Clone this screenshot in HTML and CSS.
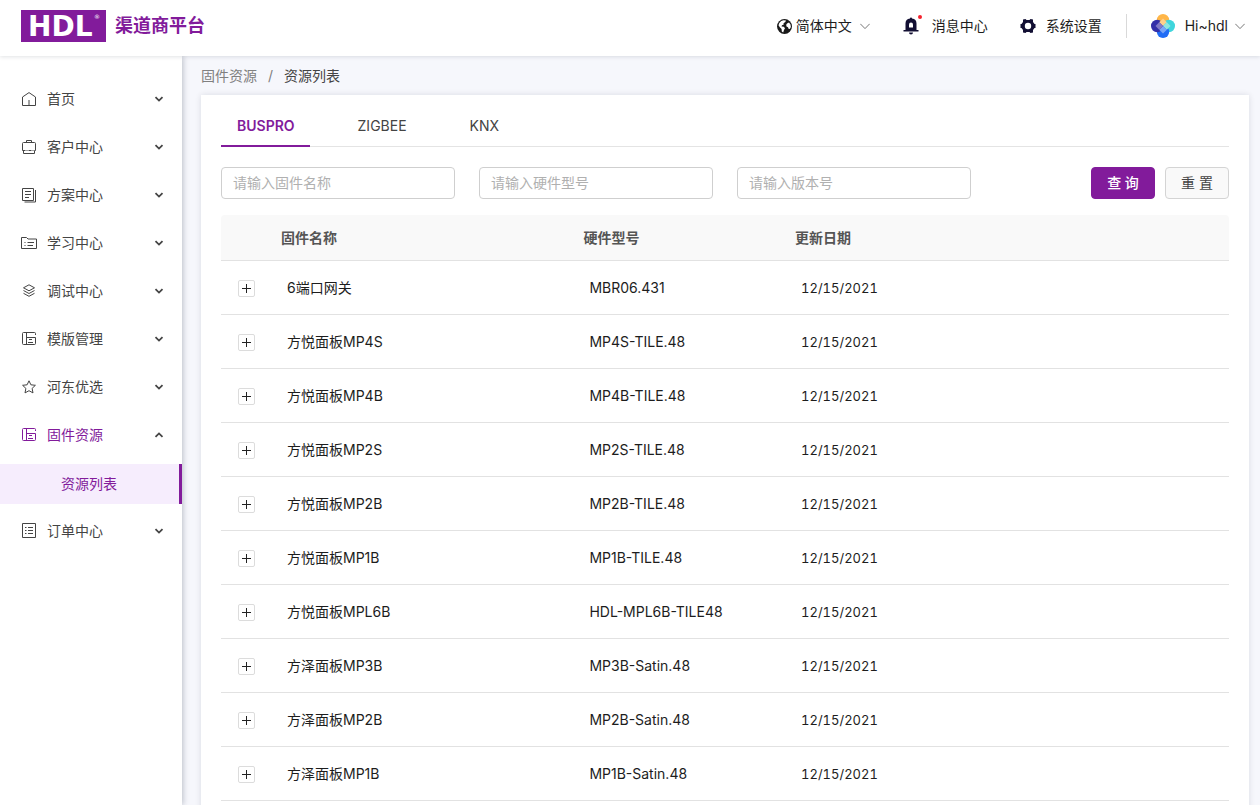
FILE: index.html
```html
<!DOCTYPE html>
<html lang="zh-CN">
<head>
    <meta charset="UTF-8">
    <meta name="viewport" content="width=device-width, initial-scale=1.0">
    <title>渠道商平台</title>
    <link rel="stylesheet" href="styles.css">
</head>
<body>
    <!-- 公用图标 -->
    <svg class="sprite" aria-hidden="true">
        <symbol id="arrow" viewBox="0 0 10 10">
            <path d="M1.5 3.2 5 6.6 8.5 3.2" fill="none" stroke="currentColor" stroke-width="1.8"/>
        </symbol>
        <symbol id="arrow-thin" viewBox="0 0 10 10">
            <path d="M.3 2.8 5 7.6 9.7 2.8" fill="none" stroke="currentColor" stroke-width="1"/>
        </symbol>
        <symbol id="layout" viewBox="0 0 14 14">
            <g fill="none" stroke="currentColor">
                <path d="M13.5 3V1.5a1 1 0 0 0-1-1h-11a1 1 0 0 0-1 1v10a1 1 0 0 0 1 1h11a1 1 0 0 0 1-1v-6h-9M4.5 .5v12"/>
                <path d="M7 7.5h3M6 10.5h5"/>
            </g>
        </symbol>
    </svg>

    <header class="header">
        <a class="brand" href="#">
            <span class="logo">HDL<sup>®</sup></span>
            <span class="brand-name">渠道商平台</span>
        </a>
        <div class="header-right">
            <button class="header-item lang" type="button">
                <svg width="15" height="15" viewBox="0 0 15 15">
                    <circle cx="7.5" cy="7.5" r="7.5" fill="#1a1a1a"/>
                    <path d="M6.5 1.2 9 1.5 8.3 3 6.5 4.2 6.8 5.5 5 6.2 4.5 7.5 6.8 7.8 8 9.2 7 11 6.2 13.5 4.8 12.5 4.6 10 2.8 8.2 1.5 6.2 2.3 4 4.2 2zM10 4.5 12 3.5 13.5 5.5 13.9 8 12.8 10 11.5 9.8 11 8.2 9.5 7.5 9.2 5.8z" fill="#fff"/>
                </svg>
                <span>简体中文</span>
                <svg class="caret" width="10" height="10"><use href="#arrow-thin"/></svg>
            </button>
            <a class="header-item message" href="#">
                <span class="bell">
                    <svg width="16" height="18" viewBox="0 0 16 18">
                        <path d="M7 1.5a1 1 0 0 1 2 0A5 5 0 0 1 13.5 6.5V13h2v1.5h-15V13h2V6.5A5 5 0 0 1 7 1.5zM6 15.5h4a2 2 0 0 1-4 0z" fill="#120f33"/>
                        <path d="M6 10.5v-3a2 2 0 0 1 4 0v3z" fill="#fff"/>
                    </svg>
                    <i class="dot"></i>
                </span>
                <span>消息中心</span>
            </a>
            <a class="header-item setting" href="#">
                <svg width="16" height="16" viewBox="0 0 16 16">
                    <path d="M3 1.5 5.5 1l1 1h3l1-1 2.5.5V4l1.500 2h1v4h-1L13 12v2.5l-2.500.5-1-1h-3l-1 1L3 14.5V12l-1.500-2h-1V6h1L3 4z" fill="#120f33"/>
                    <circle cx="8" cy="8" r="3.2" fill="#fff"/>
                </svg>
                <span>系统设置</span>
            </a>
            <span class="divider"></span>
            <button class="header-item user" type="button">
                <svg width="24" height="24" viewBox="0 0 24 24">
                    <circle cx="12" cy="6.2" r="6.2" fill="#ffb648"/>
                    <circle cx="17.8" cy="12" r="6.2" fill="#3fd5dc"/>
                    <circle cx="12" cy="17.8" r="6.2" fill="#1f6cf5"/>
                    <circle cx="6.2" cy="12" r="6.2" fill="#342ea8"/>
                    <path d="M12 4.5 15.8 8.2 12 12 8.2 8.2z" fill="#ffd08a"/>
                    <path d="M15.8 8.2 19.5 12 15.8 15.8 12 12z" fill="#8fe6df"/>
                    <path d="M12 12l3.8 3.8L12 19.5 8.2 15.8z" fill="#78a5f8"/>
                    <path d="M8.2 8.2 12 12 8.2 15.8 4.5 12z" fill="#8279c6"/>
                </svg>
                <span>Hi~hdl</span>
                <svg class="caret" width="10" height="10"><use href="#arrow-thin"/></svg>
            </button>
        </div>
    </header>

    <div class="container">
        <nav class="sidebar">
            <a class="menu-item" href="#">
                <svg class="icon" viewBox="0 0 14 14"><path d="M.5 5 7 .6 13.5 5v8.5H.5zM7 8v5.5"/></svg>
                <span>首页</span>
                <svg class="arrow"><use href="#arrow"/></svg>
            </a>
            <a class="menu-item" href="#">
                <svg class="icon" viewBox="0 0 14 14"><path d="M4.5 2.5v-2h5v2M.5 10.5v-7a1 1 0 0 1 1-1h11a1 1 0 0 1 1 1v7M1.5 10.5v3h11v-3"/><path d="M.5 10.5h13" stroke-dasharray="3 1 1 1"/></svg>
                <span>客户中心</span>
                <svg class="arrow"><use href="#arrow"/></svg>
            </a>
            <a class="menu-item" href="#">
                <svg class="icon" viewBox="0 0 14 14"><path d="M.5 .5h11v12H.5zM3 3.5h6M3 6.5h6M3 9.5h4M13.5 2v12h-11"/></svg>
                <span>方案中心</span>
                <svg class="arrow"><use href="#arrow"/></svg>
            </a>
            <a class="menu-item" href="#">
                <svg class="icon" viewBox="0 0 14 14"><path d="M-.5 12.5v-11h5L6 3h8.5v9.5zM2.5 6.5h1M5.5 6.5H12M2.5 9.5h1M5.5 9.5H11"/></svg>
                <span>学习中心</span>
                <svg class="arrow"><use href="#arrow"/></svg>
            </a>
            <a class="menu-item" href="#">
                <svg class="icon" viewBox="0 0 14 14"><path d="M7 .8l5.500 3-5.500 3-5.500-3zM1.500 6.5l5.500 3 5.500-3M1.500 9.300l5.500 3 5.500-3"/></svg>
                <span>调试中心</span>
                <svg class="arrow"><use href="#arrow"/></svg>
            </a>
            <a class="menu-item" href="#">
                <svg class="icon"><use href="#layout"/></svg>
                <span>模版管理</span>
                <svg class="arrow"><use href="#arrow"/></svg>
            </a>
            <a class="menu-item" href="#">
                <svg class="icon" viewBox="0 0 14 14"><path d="M7 .8l1.900 4 4.500.5-3.300 3.100.9 4.500L7 10.700l-4 2.200.9-4.500L.6 5.300l4.500-.5z"/></svg>
                <span>河东优选</span>
                <svg class="arrow"><use href="#arrow"/></svg>
            </a>
            <a class="menu-item open" href="#">
                <svg class="icon"><use href="#layout"/></svg>
                <span>固件资源</span>
                <svg class="arrow"><use href="#arrow"/></svg>
            </a>
            <a class="sub-item" href="#">资源列表</a>
            <a class="menu-item" href="#">
                <svg class="icon" viewBox="0 0 14 14"><path d="M.5 -.5h13v14H.5zM3 3.5h1.500M6 3.5h5M3 6.5h1.500M6 6.5h5M3 9.5h1.500M6 9.5h5"/></svg>
                <span>订单中心</span>
                <svg class="arrow"><use href="#arrow"/></svg>
            </a>
        </nav>

        <main class="main">
            <div class="breadcrumb">
                <a href="#">固件资源</a><span class="separator">/</span><span>资源列表</span>
            </div>

            <section class="card">
                <div class="tabs" role="tablist">
                    <button class="tab active" type="button" role="tab" aria-selected="true">BUSPRO</button>
                    <button class="tab" type="button" role="tab">ZIGBEE</button>
                    <button class="tab" type="button" role="tab">KNX</button>
                </div>

                <form class="search">
                    <input type="text" name="name" placeholder="请输入固件名称" aria-label="固件名称">
                    <input type="text" name="model" placeholder="请输入硬件型号" aria-label="硬件型号">
                    <input type="text" name="version" placeholder="请输入版本号" aria-label="版本号">
                    <div class="search-btns">
                        <button class="btn primary" type="button">查 询</button>
                        <button class="btn" type="reset">重 置</button>
                    </div>
                </form>

                <table class="table">
                    <colgroup>
                        <col class="col-expand">
                        <col class="col-name">
                        <col class="col-model">
                        <col>
                    </colgroup>
                    <thead>
                        <tr><th></th><th>固件名称</th><th>硬件型号</th><th>更新日期</th></tr>
                    </thead>
                    <tbody>
                        <tr><td><button class="expand" type="button" aria-label="展开"></button></td><td>6端口网关</td><td>MBR06.431</td><td>12/15/2021</td></tr>
                        <tr><td><button class="expand" type="button" aria-label="展开"></button></td><td>方悦面板MP4S</td><td>MP4S-TILE.48</td><td>12/15/2021</td></tr>
                        <tr><td><button class="expand" type="button" aria-label="展开"></button></td><td>方悦面板MP4B</td><td>MP4B-TILE.48</td><td>12/15/2021</td></tr>
                        <tr><td><button class="expand" type="button" aria-label="展开"></button></td><td>方悦面板MP2S</td><td>MP2S-TILE.48</td><td>12/15/2021</td></tr>
                        <tr><td><button class="expand" type="button" aria-label="展开"></button></td><td>方悦面板MP2B</td><td>MP2B-TILE.48</td><td>12/15/2021</td></tr>
                        <tr><td><button class="expand" type="button" aria-label="展开"></button></td><td>方悦面板MP1B</td><td>MP1B-TILE.48</td><td>12/15/2021</td></tr>
                        <tr><td><button class="expand" type="button" aria-label="展开"></button></td><td>方悦面板MPL6B</td><td>HDL-MPL6B-TILE48</td><td>12/15/2021</td></tr>
                        <tr><td><button class="expand" type="button" aria-label="展开"></button></td><td>方泽面板MP3B</td><td>MP3B-Satin.48</td><td>12/15/2021</td></tr>
                        <tr><td><button class="expand" type="button" aria-label="展开"></button></td><td>方泽面板MP2B</td><td>MP2B-Satin.48</td><td>12/15/2021</td></tr>
                        <tr><td><button class="expand" type="button" aria-label="展开"></button></td><td>方泽面板MP1B</td><td>MP1B-Satin.48</td><td>12/15/2021</td></tr>
                    </tbody>
                </table>
            </section>
        </main>
    </div>
</body>
</html>
```
FILE: styles.css
```css
* {
    box-sizing: border-box;
}
body {
    display: flex;
    flex-direction: column;
    height: 100vh;
    margin: 0;
    background-color: #f6f7fc;
    color: #1d1d1d;
    font-family: Inter, "Noto Sans CJK SC", sans-serif;
    font-size: 14px;
    line-height: 22px;
}
a {
    color: inherit;
    text-decoration: none;
}
button,
input {
    font: inherit;
    color: inherit;
}
button {
    padding: 0;
    border: none;
    background: none;
    cursor: pointer;
}
.sprite {
    display: none;
}

/* 顶部 */
.header {
    position: relative;
    z-index: 2;
    display: flex;
    flex: none;
    justify-content: space-between;
    align-items: center;
    height: 56px;
    padding: 0 15px 4px 21px;
    background-color: #fff;
    box-shadow: 0 1px 4px rgba(0, 21, 41, 0.12);
}
.brand {
    display: flex;
    align-items: center;
    gap: 9px;
}
.logo {
    position: relative;
    width: 85px;
    height: 32px;
    padding-left: 7px;
    background-color: #821b9b;
    color: #fff;
    font-family: "DejaVu Sans", sans-serif;
    font-size: 28px;
    font-weight: bold;
    line-height: 34px;
}
.logo sup {
    position: absolute;
    top: 4px;
    right: 6px;
    font-size: 6px;
    font-weight: normal;
    line-height: 6px;
}
.brand-name {
    color: #821b9b;
    font-size: 18px;
    font-weight: 600;
}
.header-right {
    display: flex;
    align-items: center;
}
.header-item {
    display: flex;
    align-items: center;
    gap: 10px;
}
.lang {
    gap: 4px;
}
.lang .caret {
    margin-left: 4px;
}
.caret {
    color: #777;
}
.message {
    gap: 13px;
    margin-left: 33px;
}
.bell {
    position: relative;
    display: flex;
}
.dot {
    position: absolute;
    top: -2px;
    right: -3px;
    width: 4px;
    height: 4px;
    border-radius: 50%;
    background-color: #f5222d;
}
.setting {
    margin-left: 32px;
}
.divider {
    width: 1px;
    height: 24px;
    margin: 0 24px;
    background-color: #d9d9d9;
}
.user .caret {
    margin-left: -3px;
}

.container {
    display: flex;
    flex: 1;
    min-height: 0;
}

/* 左侧菜单 */
.sidebar {
    position: relative;
    z-index: 1;
    flex: none;
    width: 182px;
    padding-top: 24px;
    background-color: #fff;
    box-shadow: 1px 0 6px rgba(0, 21, 41, 0.25);
    color: #444;
}
.menu-item {
    display: flex;
    align-items: center;
    height: 40px;
    margin-bottom: 8px;
    padding: 0 18px 2px 22px;
}
.icon {
    width: 14px;
    height: 14px;
    margin-right: 11px;
    fill: none;
    stroke: currentColor;
    overflow: visible;
}
.arrow {
    width: 10px;
    height: 10px;
    margin-left: auto;
    color: #444;
}
.menu-item.open {
    color: #821b9b;
}
.open .arrow {
    transform: rotate(180deg);
}
.sub-item {
    display: block;
    margin-bottom: 8px;
    padding-left: 61px;
    border-right: 3px solid #821b9b;
    background-color: #f6edfd;
    color: #821b9b;
    line-height: 40px;
}

/* 内容 */
.main {
    display: flex;
    flex: 1;
    flex-direction: column;
    min-width: 0;
    padding: 9px 11px 0 19px;
    overflow-y: auto;
    scrollbar-width: none;
}
.breadcrumb {
    margin-bottom: 8px;
    color: #444;
}
.breadcrumb a,
.separator {
    color: #808080;
}
.separator {
    margin: 0 11px;
}
.card {
    flex: 1 0 auto;
    padding: 10px 20px 20px;
    background-color: #fff;
    box-shadow: 0 0 6px rgba(0, 21, 41, 0.12);
}
.tabs {
    display: flex;
    gap: 32px;
    margin-bottom: 20px;
    box-shadow: inset 0 -1px #e4e4e4;
}
.tab {
    height: 42px;
    padding: 2px 15px 0 16px;
    border-bottom: 2px solid transparent;
    color: #444;
}
.tab.active {
    border-color: #821b9b;
    color: #821b9b;
    font-weight: 600;
}
.search {
    display: flex;
    gap: 24px;
    margin-bottom: 16px;
}
.search input {
    width: 234px;
    height: 32px;
    padding: 0 11px 2px;
    border: 1px solid #cfcfcf;
    border-radius: 4px;
    outline: none;
}
.search input::placeholder {
    color: #b0b0b0;
}
.search-btns {
    display: flex;
    gap: 10px;
    margin-left: auto;
}
.btn {
    width: 64px;
    height: 32px;
    border: 1px solid #d4d4d4;
    border-radius: 4px;
    background-color: #f9f9f9;
    color: #444;
}
.btn.primary {
    border-color: #821b9b;
    background-color: #821b9b;
    color: #fff;
    font-weight: 500;
}

.table {
    width: 100%;
    border-collapse: separate;
    border-spacing: 0;
    table-layout: fixed;
}
.col-expand {
    width: 50px;
}
.col-name {
    width: 30%;
}
.col-model {
    width: 21%;
}
.table th {
    height: 46px;
    padding: 0 10px;
    border-bottom: 1px solid #e2e2e2;
    background-color: #f9f9f9;
    color: #555;
    font-weight: 600;
    text-align: left;
}
.table th:first-child {
    border-top-left-radius: 4px;
}
.table th:last-child {
    border-top-right-radius: 4px;
}
.table td {
    height: 54px;
    padding: 0 16px;
    border-bottom: 1px solid #e2e2e2;
}
.table td:first-child {
    padding: 2px 16px 0 17px;
}
.table td:last-child {
    font-size: 13px;
    font-variant-numeric: tabular-nums;
}
.expand {
    display: block;
    width: 17px;
    height: 17px;
    border: 1px solid #dcdcdc;
    border-radius: 2px;
    background:
        linear-gradient(#222, #222) center / 9px 1px no-repeat,
        linear-gradient(#222, #222) center / 1px 9px no-repeat;
}
```
